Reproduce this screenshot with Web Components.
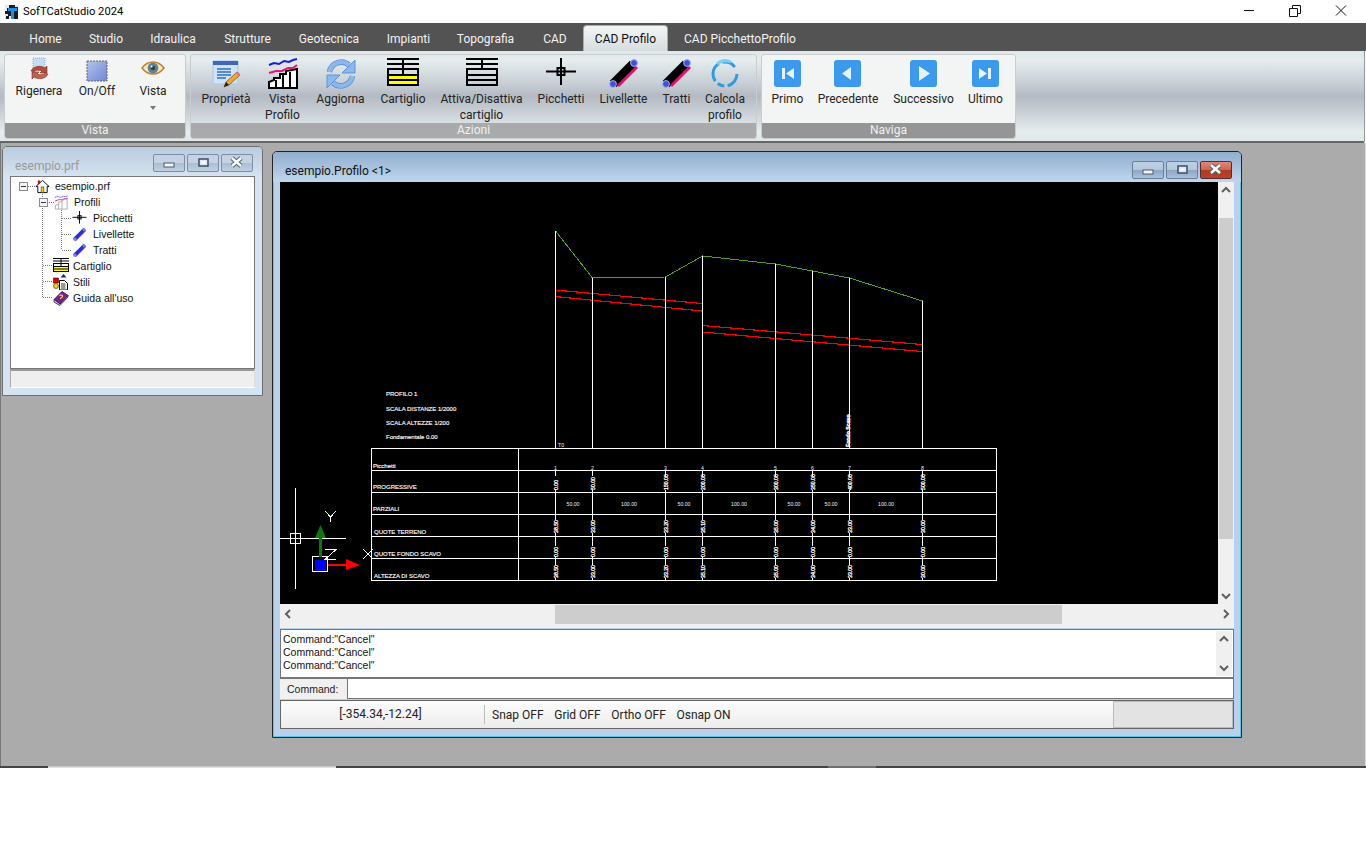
<!DOCTYPE html>
<html lang="it">
<head>
<meta charset="utf-8">
<title>SofTCatStudio 2024</title>
<style>
  html, body { margin: 0; background: #fff; }
  body { font: 12px Roboto, "Liberation Sans", sans-serif; color: #000; }
  app-shell { display: block; }
</style>
</head>
<body>
<app-shell>
  <title-bar caption="SofTCatStudio 2024"></title-bar>
  <ribbon-tabs active="CAD Profilo"></ribbon-tabs>
  <ribbon-bar>
    <ribbon-group label="Vista" plain>
      <ribbon-button small icon="rigenera" width="60">Rigenera</ribbon-button>
      <ribbon-button small icon="onoff" width="56">On/Off</ribbon-button>
      <ribbon-button small menu icon="eye" width="56">Vista</ribbon-button>
    </ribbon-group>
    <ribbon-group label="Azioni">
      <ribbon-button icon="props" width="62">Proprietà</ribbon-button>
      <ribbon-button icon="profile" width="51">Vista Profilo</ribbon-button>
      <ribbon-button icon="refresh" width="65">Aggiorna</ribbon-button>
      <ribbon-button icon="cartiglio" width="60">Cartiglio</ribbon-button>
      <ribbon-button icon="table" width="97">Attiva/Disattiva cartiglio</ribbon-button>
      <ribbon-button icon="cross" width="62">Picchetti</ribbon-button>
      <ribbon-button icon="bar" width="63">Livellette</ribbon-button>
      <ribbon-button icon="bar" width="43">Tratti</ribbon-button>
      <ribbon-button icon="ring" width="54">Calcola profilo</ribbon-button>
    </ribbon-group>
    <ribbon-group label="Naviga" plain>
      <ribbon-button icon="first" width="43">Primo</ribbon-button>
      <ribbon-button icon="prev" width="78">Precedente</ribbon-button>
      <ribbon-button icon="next" width="73">Successivo</ribbon-button>
      <ribbon-button icon="last" width="51">Ultimo</ribbon-button>
    </ribbon-group>
  </ribbon-bar>
  <mdi-area>
    <mdi-window caption="esempio.prf" style="left:1px;top:3px;width:261px;height:250px">
      <project-tree></project-tree>
    </mdi-window>
    <mdi-window active caption="esempio.Profilo &lt;1&gt;" style="left:271px;top:8px;width:970px;height:587px">
      <cad-view></cad-view>
      <command-panel></command-panel>
      <cad-status></cad-status>
    </mdi-window>
  </mdi-area>
</app-shell>

<script>
// icons used by the ribbon and the tree, all drawn on a 32x32 box
const ICONS = {
  rigenera: `<path d="M10 1h12v11H10z" fill="#c4dcf4" stroke="#8fb0d0" stroke-dasharray="1 1"/>
    <path d="M8 14c2-5 10-6 14-3l2-2v7h-7l2-2c-3-1-7-1-8 1z" fill="#b5493a" stroke="#7e2f25" stroke-width=".6"/>
    <path d="M25 17c-2 5-10 6-14 3l-2 2v-7h7l-2 2c3 1 7 1 8-1z" fill="#c4604c" stroke="#7e2f25" stroke-width=".6"/>`,
  onoff: `<defs><linearGradient id="oo" x1="0" y1="0" x2="1" y2="1"><stop offset="0" stop-color="#b4c4ea"/><stop offset="1" stop-color="#6f86da"/></linearGradient></defs>
    <rect x="6" y="4" width="20" height="20" fill="url(#oo)" stroke="#666" stroke-dasharray="2 1"/>`,
  eye: `<path d="M5 11c6-8 16-8 22 0-6 8-16 8-22 0z" fill="#f5e9c8" stroke="#c9822a" stroke-width="1.6"/>
    <circle cx="16" cy="11" r="5.4" fill="#5e8296"/><circle cx="16" cy="11" r="2.2" fill="#26424f"/><circle cx="14.6" cy="9.4" r="1" fill="#fff"/>`,
  props: `<rect x="3" y="3" width="25" height="23" fill="#cfe2f8" stroke="#a9c6e8"/><rect x="3" y="3" width="25" height="4" fill="#3f68b4"/>
    <path d="M7 11h14M7 14h14M7 17h14M7 20h9" stroke="#2f6fc8" stroke-width="1.6"/>
    <path d="M14 29l2-5 11-10 3 3-11 10z" fill="#f3a52e" stroke="#7b4a10" stroke-width=".7"/><path d="M14 29l2-5 3 3z" fill="#222"/><path d="M26 15l3 3 1.4-1.6-3-3z" fill="#e8697a"/>`,
  profile: `<path d="M2 30V24l5-2 0-2 6 0 0-4 6 0 0-3 6-1 5-1v19z" fill="#fff" stroke="#000" stroke-width="2"/>
    <path d="M9 22v8M16 17v13M23 14v16" stroke="#000" stroke-width="2"/>
    <path d="M2 7l5-2 5 1 5-3 5 1 4-2 4-1" fill="none" stroke="#1a1ae0" stroke-width="2"/>
    <path d="M2 15l7-2 6 0 6-3 5 0 4-3" fill="none" stroke="#f0127c" stroke-width="2"/>`,
  refresh: `<g fill="none" stroke="#5f93d6" stroke-width="5.600"><path d="M4.500 14A12 12 0 0 1 24 7"/><path d="M27.500 18A12 12 0 0 1 8 25"/></g>
    <g fill="none" stroke="#8cb8ee" stroke-width="4"><path d="M4.500 14A12 12 0 0 1 24 7"/><path d="M27.500 18A12 12 0 0 1 8 25"/></g>
    <path d="M30 2v13H17z" fill="#8cb8ee" stroke="#5f93d6"/><path d="M2 30V17h13z" fill="#8cb8ee" stroke="#5f93d6"/>`,
  cartiglio: `<rect x="0" y="17" width="32" height="11" fill="#ffff00"/>
    <path d="M0 1h32M0 6h32M0 11h32M0 17h32M0 22h32M0 27h32" stroke="#000" stroke-width="2"/>
    <path d="M1 10v18M31 10v18M16 0v17" stroke="#000" stroke-width="2" fill="none"/>`,
  table: `<path d="M0 1h32M0 6h32M0 11h32M0 17h32M0 22h32M0 27h32" stroke="#000" stroke-width="2"/>
    <path d="M1 10v18M31 10v18M16 0v11" stroke="#000" stroke-width="2" fill="none"/>`,
  cross: `<path d="M1 13.500h30M16 0v27" stroke="#000" stroke-width="2"/><rect x="12.500" y="10" width="7" height="7" fill="none" stroke="#000" stroke-width="2"/>`,
  bar: `<path d="M5 26L25 6" stroke="#000" stroke-width="9"/><path d="M10 28L29 9" stroke="#e0126e" stroke-width="3"/>
    <circle cx="26" cy="5" r="3.4" fill="#3d52d8" stroke="#9db0f0"/><circle cx="5" cy="26" r="3.4" fill="#3d52d8" stroke="#9db0f0"/>`,
  ring: `<circle cx="16" cy="16" r="12" fill="none" stroke="#2d9be6" stroke-width="3" stroke-dasharray="16 3.500 7 3.500 20 3.500 14 8"/>
    <path d="M8 6a13 13 0 0 1 14-2" fill="none" stroke="#7ad0f0" stroke-width="3"/>`,
  first: `<rect x="2" y="2" width="27" height="27" rx="3" fill="#3b99ee"/><path d="M10 10h3v11h-3zM22 10v11l-8-5.500z" fill="#e6f2fd"/>`,
  prev: `<rect x="2" y="2" width="27" height="27" rx="3" fill="#3b99ee"/><path d="M19 9v13l-9-6.500z" fill="#e6f2fd"/>`,
  next: `<rect x="2" y="2" width="27" height="27" rx="3" fill="#3b99ee"/><path d="M11 8v15l11-7.500z" fill="#e6f2fd"/>`,
  last: `<rect x="2" y="2" width="27" height="27" rx="3" fill="#3b99ee"/><path d="M18 10h3v11h-3zM9 10v11l8-5.500z" fill="#e6f2fd"/>`,
  home: `<path d="M16 3L2 16h4v13h20V16h4z" fill="#fff" stroke="#000" stroke-width="2"/><path d="M6 3h5v5l-5 5z" fill="#b01818"/><rect x="13" y="17" width="6" height="12" fill="#ffd000" stroke="#000"/>`,
  miniprofile: `<path d="M3 30V22l7-2v-5l7-1v-3l11-2v21z" fill="#fff" stroke="#999" stroke-width="1.6"/><path d="M10 20v10M17 14v16" stroke="#999" stroke-width="1.6"/>
    <path d="M2 5l6-2 6 2 6-2 6 0 4-2" fill="none" stroke="#3030d0" stroke-width="1.6" stroke-dasharray="3 1"/><path d="M2 13l8-3 8 0 6-3 6 0" fill="none" stroke="#ee1a88" stroke-width="1.8"/>`,
  treebar: `<path d="M5 27L27 5" stroke="#2030d8" stroke-width="8"/><path d="M8 29L29 8" stroke="#e0126e" stroke-width="2"/><circle cx="26" cy="6" r="3.500" fill="#6d88e0"/><circle cx="6" cy="26" r="3.500" fill="#6d88e0"/>`,
  stili: `<rect x="1" y="8" width="10" height="10" fill="#e00000" stroke="#000"/><circle cx="6" cy="24" r="5" fill="#f0d800" stroke="#000"/>
    <path d="M13 13h10l6 6v13H13z" fill="#fff" stroke="#000" stroke-width="2"/><path d="M16 20h9M16 24h9M16 28h9" stroke="#000" stroke-width="1.600"/><path d="M21 0l6 7H15z" fill="#20209a"/>`,
  book: `<path d="M2 19L18 3l12 8-16 17z" fill="#7a1d9a" stroke="#2c0a3a" stroke-width="1.600"/><path d="M2 19v5l12 7 16-17v-3L14 28z" fill="#d8d8e8" stroke="#2c0a3a" stroke-width="1.600"/><path d="M13 12c2-3 7-2 6 1s-4 2-4 5" fill="none" stroke="#ffd800" stroke-width="2.400"/>`
};
const svgIcon = (name, size) => `<svg width="${size}" height="${size}" viewBox="0 0 32 32" aria-hidden="true">${ICONS[name]}</svg>`;

class TitleBar extends HTMLElement {
  connectedCallback() {
    this.attachShadow({ mode: 'open' }).innerHTML = `
      <style>
        :host { display: flex; align-items: center; height: 23px; background: #fff; position: relative; }
        .logo { margin: 0 5px 0 5px; display: block; }
        .cap { font-size: 11.2px; }
        .ctl { margin-left: auto; display: flex; }
        .ctl svg { display: block; width: 46px; height: 23px; }
      </style>
      <svg class="logo" width="13" height="14" viewBox="0 0 13 14">
        <rect width="13" height="14" fill="#1c1c1c"/><path d="M0 0h4v3H2v3H0zM0 9h3v2H1v3H0zM4 11h2v3H4zM10 0h3v2h-3z" fill="#e8e8e8"/>
        <path d="M3 3h9v3H9v8H6V6H3z" fill="#1d8fe6"/>
      </svg>
      <span class="cap">${this.getAttribute('caption')}</span>
      <div class="ctl">
        <svg viewBox="0 0 46 23"><path d="M18 10.500h10" stroke="#111" fill="none"/></svg>
        <svg viewBox="0 0 46 23"><path d="M17.500 8.500h8v8h-8zM20.500 8.500v-3h8v8h-3" stroke="#111" fill="none"/></svg>
        <svg viewBox="0 0 46 23" style="margin-right:2px"><path d="M18 5.500l10 10M28 5.500l-10 10" stroke="#111" fill="none"/></svg>
      </div>`;
  }
}

class RibbonTabs extends HTMLElement {
  connectedCallback() {
    const tabs = [['Home', 61], ['Studio', 60], ['Idraulica', 74], ['Strutture', 75], ['Geotecnica', 88], ['Impianti', 71],
      ['Topografia', 83], ['CAD', 56], ['CAD Profilo', 85], ['CAD PicchettoProfilo', 144]];
    const active = this.getAttribute('active');
    this.attachShadow({ mode: 'open' }).innerHTML = `
      <style>
        :host { display: flex; align-items: flex-end; height: 28px; background: #535353; padding-left: 15px; box-sizing: border-box; }
        div { height: 26px; line-height: 28px; text-align: center; color: #f2f2f2; font-size: 12px; box-sizing: border-box; }
        .on { color: #111; background: linear-gradient(#f4f6f6, #e4e9ea 50%, #d6dce0); border: 1px solid #a8acae; border-bottom: 0; border-radius: 4px 4px 0 0; line-height: 26px; }
      </style>
      ${tabs.map(([t, w]) => `<div style="width:${w}px" class="${t === active ? 'on' : ''}">${t}</div>`).join('')}`;
  }
}

class RibbonBar extends HTMLElement {
  connectedCallback() {
    this.attachShadow({ mode: 'open' }).innerHTML = `
      <style>
        :host { display: flex; gap: 4px; height: 92px; box-sizing: border-box; padding: 3px 0 4px 4px; margin-right: 1px;
          background: linear-gradient(#e0e7e8 0, #e6edee 10%, #c9d0d6 35%, #b4bac3 50%, #c5ccd2 65%, #e6edee 90%, #e2e9ea 97%);
          border-bottom: 2px solid #666; border-right: 1px solid #999; border-radius: 0 0 2px 0; }
      </style><slot></slot>`;
  }
}

class RibbonGroup extends HTMLElement {
  connectedCallback() {
    this.attachShadow({ mode: 'open' }).innerHTML = `
      <style>
        :host { display: flex; flex-direction: column; box-sizing: border-box; height: 85px; border: 1px solid #c9cdd0; border-radius: 3px; overflow: hidden; }
        :host([plain]) { background: #f3f5f5; }
        .items { display: flex; flex: 1; padding: 0 4px; min-height: 0; }
        .lab { height: 15px; line-height: 15px; text-align: center; font-size: 12px; color: #f0f0f0; background: #a9abab; flex: none; }
        :host([plain]) .lab { background: #959595; }
      </style>
      <div class="items"><slot></slot></div>
      <div class="lab">${this.getAttribute('label')}</div>`;
  }
}

class RibbonButton extends HTMLElement {
  connectedCallback() {
    const small = this.hasAttribute('small');
    const menu = this.hasAttribute('menu');
    this.attachShadow({ mode: 'open' }).innerHTML = `
      <style>
        :host { display: flex; flex-direction: column; align-items: center; flex: none; width: ${this.getAttribute('width')}px; text-align: center; color: #222; }
        .ic { height: ${small ? 26 : 33}px; margin-top: ${small ? 2 : 3}px; flex: none; }
        .ic svg { display: block; overflow: visible; }
        .lb { line-height: 16px; font-size: 12px; max-width: 100%; }
        .arrow { width: 0; height: 0; border: 3px solid transparent; border-top: 4px solid #777; border-bottom: 0; margin-top: 7px; }
      </style>
      <div class="ic">${svgIcon(this.getAttribute('icon'), 32)}</div>
      <div class="lb"><slot></slot></div>
      ${menu ? '<div class="arrow"></div>' : ''}`;
  }
}

class MdiArea extends HTMLElement {
  connectedCallback() {
    this.attachShadow({ mode: 'open' }).innerHTML = `
      <style>
        :host { display: flex; flex-direction: column; justify-content: flex-end; position: relative; height: 625px; box-sizing: border-box; background: #ababab; border-left: 1px solid #777; border-right: 1px solid #ddd; }
        .foot { display: flex; height: 2px; margin: 0 -1px; background: #444; }
        .foot i { display: block; height: 2px; }
      </style>
      <slot></slot>
      <div class="foot"><i style="width:48px"></i><i style="width:288px;background:linear-gradient(#bbb,#eee)"></i><i style="width:492px"></i><i style="width:48px;background:#6e6e6e"></i></div>`;
  }
}

class MdiWindow extends HTMLElement {
  connectedCallback() {
    const active = this.hasAttribute('active');
    const glyphs = [
      '<rect x="12" y="8" width="10" height="4" fill="#f4f4f4" stroke="#4a5a70"/>',
      '<rect x="13" y="4" width="9" height="7" fill="#dfe7f0" stroke="#3e4e68" stroke-width="1.500"/><rect x="15.500" y="6.500" width="4" height="2" fill="#fff"/>',
      '<path d="M12 3l9 8M21 3l-9 8" stroke="#566" stroke-width="4.500"/><path d="M12 3l9 8M21 3l-9 8" stroke="#fff" stroke-width="2.400"/>'
    ];
    this.attachShadow({ mode: 'open' }).innerHTML = `
      <style>
        :host { display: flex; flex-direction: column; position: absolute; box-sizing: border-box; background: #d6e4f2; border: 1px solid #6e6e6e; border-radius: 5px 5px 0 0; padding: 0 7px 7px; }
        :host([active]) { background: #b9d1ea; border-color: #222; box-shadow: inset 0 0 0 1px #58c8e8; }
        .head { display: flex; align-items: center; height: 29px; flex: none; margin: 0 -7px; padding: 0 9px 0 12px;
          background: linear-gradient(#b9cbde, #d6e3f0); border-radius: 4px 4px 0 0; }
        :host([active]) .head { background: linear-gradient(#90aecf, #bfd6ec); height: 30px; padding-left: 12px; }
        .cap { flex: 1; font-size: 12px; color: #999; margin-top: 8px; }
        :host([active]) .cap { color: #111; }
        .btns { display: flex; gap: 2px; margin-top: ${active ? 6 : 2}px; }
        .btn { width: 32px; height: 18px; box-sizing: border-box; border: 1px solid #7c8da4; border-radius: 2px; background: linear-gradient(#c3d3e4, #c3d3e4 50%, #a9bdd3 50%, #c0d0e2); }
        :host([active]) .btn { background: linear-gradient(#bfd0e3, #b3c7dd 50%, #8ba6c4 50%, #a9c0d8); border-color: #6d7e98; }
        :host([active]) .btn.x { background: linear-gradient(#dd8a78, #d2624d 50%, #b23a22 50%, #b9422a); border-color: #5a2a2a; }
        .btn svg { display: block; width: 30px; height: 16px; margin: 0; }
        .body { flex: 1; display: flex; flex-direction: column; min-height: 0; }
      </style>
      <div class="head">
        <span class="cap">${this.getAttribute('caption').replace(/</g, '&lt;')}</span>
        <div class="btns">
          ${glyphs.map((g, i) => `<div class="btn ${i === 2 ? 'x' : ''}"><svg viewBox="2 0 30 16">${g}</svg></div>`).join('')}
        </div>
      </div>
      <div class="body"><slot></slot></div>`;
  }
}

class ProjectTree extends HTMLElement {
  connectedCallback() {
    const rows = [
      [24, 'home', 'esempio.prf', 15, 5], [43, 'miniprofile', 'Profili', 15, 5], [61, 'cross', 'Picchetti', 15, 6], [61, 'treebar', 'Livellette', 15, 6],
      [61, 'treebar', 'Tratti', 15, 6], [42, 'cartiglio', 'Cartiglio', 16, 4], [42, 'stili', 'Stili', 16, 4], [42, 'book', "Guida all'uso", 16, 4]
    ];
    const expander = (x, y) => `<rect x="${x}.5" y="${y}.5" width="8" height="8" fill="#f4f4f4" stroke="#8a8a8a"/><path d="M${x + 2} ${y + 4.5}h5" stroke="#334"/>`;
    this.attachShadow({ mode: 'open' }).innerHTML = `
      <style>
        :host { display: flex; flex-direction: column; flex: 1; min-height: 0; }
        .tree { position: relative; flex: none; background: #fff; border: 1px solid #777; box-sizing: border-box; height: 193px; padding-top: 1px; }
        .tree > svg { position: absolute; left: 0; top: 0; }
        .row { display: flex; align-items: center; height: 16px; position: relative; }
        .row svg { flex: none; display: block; }
        .row span { font: 10.5px "Liberation Sans", sans-serif; color: #111; white-space: nowrap; }
        .st { height: 19px; flex: none; margin: 0; background: #efefef; border: 1px solid #aaa; border-top: 2px solid #999; box-sizing: border-box; border-right-color: #ddd; border-bottom-color: #fff; }
      </style>
      <div class="tree">
        <svg width="243" height="191" fill="none" stroke="#777" stroke-dasharray="1 1" shape-rendering="crispEdges">
          <path d="M17 9.500h7M31.500 17v103.500M36 25.500h7M32 88.500h10M32 104.500h10M32 120.500h10"/>
          <path d="M50.500 29v44M51 41.500h10M51 57.500h10M51 73.500h10"/>
          <g stroke-dasharray="none">${expander(8, 5)}${expander(28, 21)}</g>
        </svg>
        ${rows.map(([x, ic, t, s, g]) => `<div class="row" style="padding-left:${x}px">${svgIcon(ic, s)}<span style="margin-left:${g}px">${t}</span></div>`).join('')}
      </div>
      <div class="st"></div>`;
  }
}

class WinScroll extends HTMLElement {
  connectedCallback() {
    const vert = this.getAttribute('orient') === 'v';
    const start = this.getAttribute('start');
    const size = this.getAttribute('size');
    const chev = d => `<svg width="16" height="16" viewBox="0 0 16 16"><path d="${d}" fill="none" stroke="#606060" stroke-width="2"/></svg>`;
    this.attachShadow({ mode: 'open' }).innerHTML = `
      <style>
        :host { display: flex; flex-direction: ${vert ? 'column' : 'row'}; flex: none; background: #f0f0f0; justify-content: space-between; }
        svg { display: block; flex: none; }
        .sp { flex: none; ${vert ? 'height' : 'width'}: ${start}px; }
        .th { flex: none; background: #cdcdcd; ${vert ? `height:${size}px; margin: 0 1px` : `width:${size}px; height: 19px; margin-top: 1px`}; }
        .grow { flex: 1; }
        .a { ${vert ? '' : 'margin-top: 2px'} }
      </style>
      <div class="a">${chev(vert ? 'M4 10l4-4 4 4' : 'M10 4L6 8l4 4')}</div>
      ${size ? `<div class="sp"></div><div class="th"></div>` : ''}<div class="grow"></div>
      <div class="a">${chev(vert ? 'M4 6l4 4 4-4' : 'M6 4l4 4-4 4')}</div>`;
  }
}

class CadView extends HTMLElement {
  connectedCallback() {
    const xs = [555, 592, 665, 702, 775, 812, 849, 922];
    const tops = [231, 278, 277, 256, 264, 271, 278, 301];
    const ground = xs.map((x, i) => `${x}.5,${tops[i]}`).join(' ');
    const prog = ['0.00', '50.00', '150.00', '200.00', '300.00', '350.00', '400.00', '500.00'];
    const terr = ['38.50', '33.00', '33.20', '35.10', '35.00', '34.00', '33.00', '30.00'];
    const parz = [[573, '50.00'], [629, '100.00'], [684, '50.00'], [739, '100.00'], [794, '50.00'], [831, '50.00'], [886, '100.00']];
    const vtext = (x, y, t) => `<text class="v" transform="translate(${x + 2.5} ${y}) rotate(-90)">${t}</text>`;
    const labels = [[373, 468, 'Picchetti'], [373, 489, 'PROGRESSIVE'], [373, 511, 'PARZIALI'], [374, 534, 'QUOTE TERRENO'], [374, 556, 'QUOTE FONDO SCAVO'], [374, 578, 'ALTEZZA DI SCAVO']];
    const head = [[386, 396, 'PROFILO 1'], [386, 411, 'SCALA DISTANZE 1/2000'], [386, 425, 'SCALA ALTEZZE 1/200'], [386, 439, 'Fondamentale 0.00']];
    this.attachShadow({ mode: 'open' }).innerHTML = `
      <style>
        :host { display: block; flex: none; }
        .top { display: flex; height: 422px; }
        .cv { display: block; background: #000; flex: none; }
        text { fill: #fff; font: 6px "Liberation Sans", sans-serif; stroke: #fff; stroke-width: .15px; }
        text.v { font-size: 5.2px; stroke-width: .3px; }
        text.p { font-size: 5.2px; stroke: none; text-anchor: middle; fill: #e8f0ff; }
        win-scroll.v { width: 16px; }
        win-scroll.h { height: 24px; }
      </style>
      <div class="top">
        <svg class="cv" width="938" height="422" viewBox="280 182 938 422" shape-rendering="crispEdges">
          <polyline points="${ground}" fill="none" stroke="#57a300"/>
          <path stroke="#f00" stroke-width="1.150" fill="none" d="M555 290L702 303.500M555 296.500L702 311M702 325.500L922 344.500M702 332L922 351.500"/>
          <g stroke="#fff" fill="none">
            ${xs.map((x, i) => `<path d="M${x}.5 ${tops[i]}V448M${x}.5 471V476M${x}.5 490V520M${x}.5 533V546M${x}.5 557V565M${x}.5 578V580"/>`).join('')}
            <path d="M371.500 448.500H996.500V580.500H371.500zM371.500 470.500H996.500M371.500 492.500H996.500M371.500 514.500H996.500M371.500 536.500H996.500M371.500 558.500H996.500M518.500 448V580"/>
          </g>
          ${head.map(([x, y, t]) => `<text x="${x}" y="${y}">${t}</text>`).join('')}
          ${labels.map(([x, y, t]) => `<text x="${x}" y="${y}">${t}</text>`).join('')}
          <text class="p" x="561" y="447">T0</text>
          <text class="v" transform="translate(850 447) rotate(-90)" style="stroke-width:.35px;font-weight:bold">Fondo Scavo</text>
          ${xs.map((x, i) => `<text class="p" x="${x + .5}" y="470">${i + 1}</text>`).join('')}
          ${xs.map((x, i) => vtext(x, 490, prog[i])).join('')}
          ${parz.map(([x, t]) => `<text class="p" x="${x}" y="506">${t}</text>`).join('')}
          ${xs.map((x, i) => vtext(x, 533, terr[i])).join('')}
          ${xs.map(x => vtext(x, 557, '0.00')).join('')}
          ${xs.map((x, i) => vtext(x, 578, terr[i])).join('')}
          <g stroke="#fff" fill="none">
            <path d="M295.500 488V589M280 538.500H346"/><rect x="290.500" y="533.500" width="10" height="10"/>
            <path d="M325 511l5.500 6 5.500-6M330.500 517v5"/>
            <path d="M325 549.500h11L325 559.500h11"/>
            <path d="M363 549l10 10M373 549l-10 10"/>
            <rect x="312.500" y="556.500" width="15" height="15"/>
          </g>
          <rect x="319" y="537" width="3" height="20" fill="#0a7a0a"/>
          <path d="M320.500 525L326 538H315z" fill="#0a7a0a" shape-rendering="geometricPrecision"/>
          <rect x="315" y="560" width="11" height="11" fill="#0000ff"/>
          <rect x="328" y="564" width="19" height="2" fill="#f00"/>
          <path d="M346 559l14 6-14 5z" fill="#f00" shape-rendering="geometricPrecision"/>
        </svg>
        <win-scroll class="v" orient="v" start="20" size="321"></win-scroll>
      </div>
      <win-scroll class="h" orient="h" start="259" size="507"></win-scroll>`;
  }
}

class CommandPanel extends HTMLElement {
  connectedCallback() {
    this.attachShadow({ mode: 'open' }).innerHTML = `
      <style>
        :host { display: block; flex: none; margin-top: 1px; font-family: "Liberation Sans", sans-serif; }
        .log { display: flex; height: 50px; box-sizing: border-box; background: #fff; border: 1px solid #777; border-bottom-width: 2px; }
        .lines { flex: 1; padding: 3px 0 0 2px; line-height: 13px; font-size: 10.5px; color: #111; }
        win-scroll { width: 16px; margin: 1px 1px 1px 0; }
        .in { display: flex; height: 20px; align-items: center; background: #f0f0f0; }
        .in span { width: 67px; padding-left: 7px; box-sizing: border-box; font-size: 10.5px; color: #222; }
        .in div { flex: 1; height: 100%; box-sizing: border-box; background: #fff; border: 1px solid #777; border-top: 0; }
      </style>
      <div class="log">
        <div class="lines">Command:"Cancel"<br>Command:"Cancel"<br>Command:"Cancel"</div>
        <win-scroll orient="v"></win-scroll>
      </div>
      <div class="in"><span>Command:</span><div></div></div>`;
  }
}

class CadStatus extends HTMLElement {
  connectedCallback() {
    this.attachShadow({ mode: 'open' }).innerHTML = `
      <style>
        :host { display: flex; align-items: center; flex: none; height: 29px; margin-top: 1px; box-sizing: border-box; border: 1px solid #666; background: linear-gradient(#fdfdfd, #ececec); font-size: 12px; color: #222; }
        .xy { width: 204px; padding-right: 4px; text-align: center; border-right: 1px solid #bbb; height: 19px; line-height: 19px; flex: none; box-sizing: border-box; }
        .items { display: flex; gap: 10.7px; padding-left: 7px; }
        .tray { margin-left: auto; width: 120px; height: 27px; box-sizing: border-box; background: #e3e3e3; border: 1px solid #bbb; align-self: center; }
      </style>
      <div class="xy">[-354.34,-12.24]</div>
      <div class="items"><span>Snap OFF</span><span>Grid OFF</span><span>Ortho OFF</span><span>Osnap ON</span></div>
      <div class="tray"></div>`;
  }
}

customElements.define('title-bar', TitleBar);
customElements.define('ribbon-tabs', RibbonTabs);
customElements.define('ribbon-bar', RibbonBar);
customElements.define('ribbon-group', RibbonGroup);
customElements.define('ribbon-button', RibbonButton);
customElements.define('mdi-area', MdiArea);
customElements.define('mdi-window', MdiWindow);
customElements.define('project-tree', ProjectTree);
customElements.define('win-scroll', WinScroll);
customElements.define('cad-view', CadView);
customElements.define('command-panel', CommandPanel);
customElements.define('cad-status', CadStatus);
</script>
</body>
</html>
